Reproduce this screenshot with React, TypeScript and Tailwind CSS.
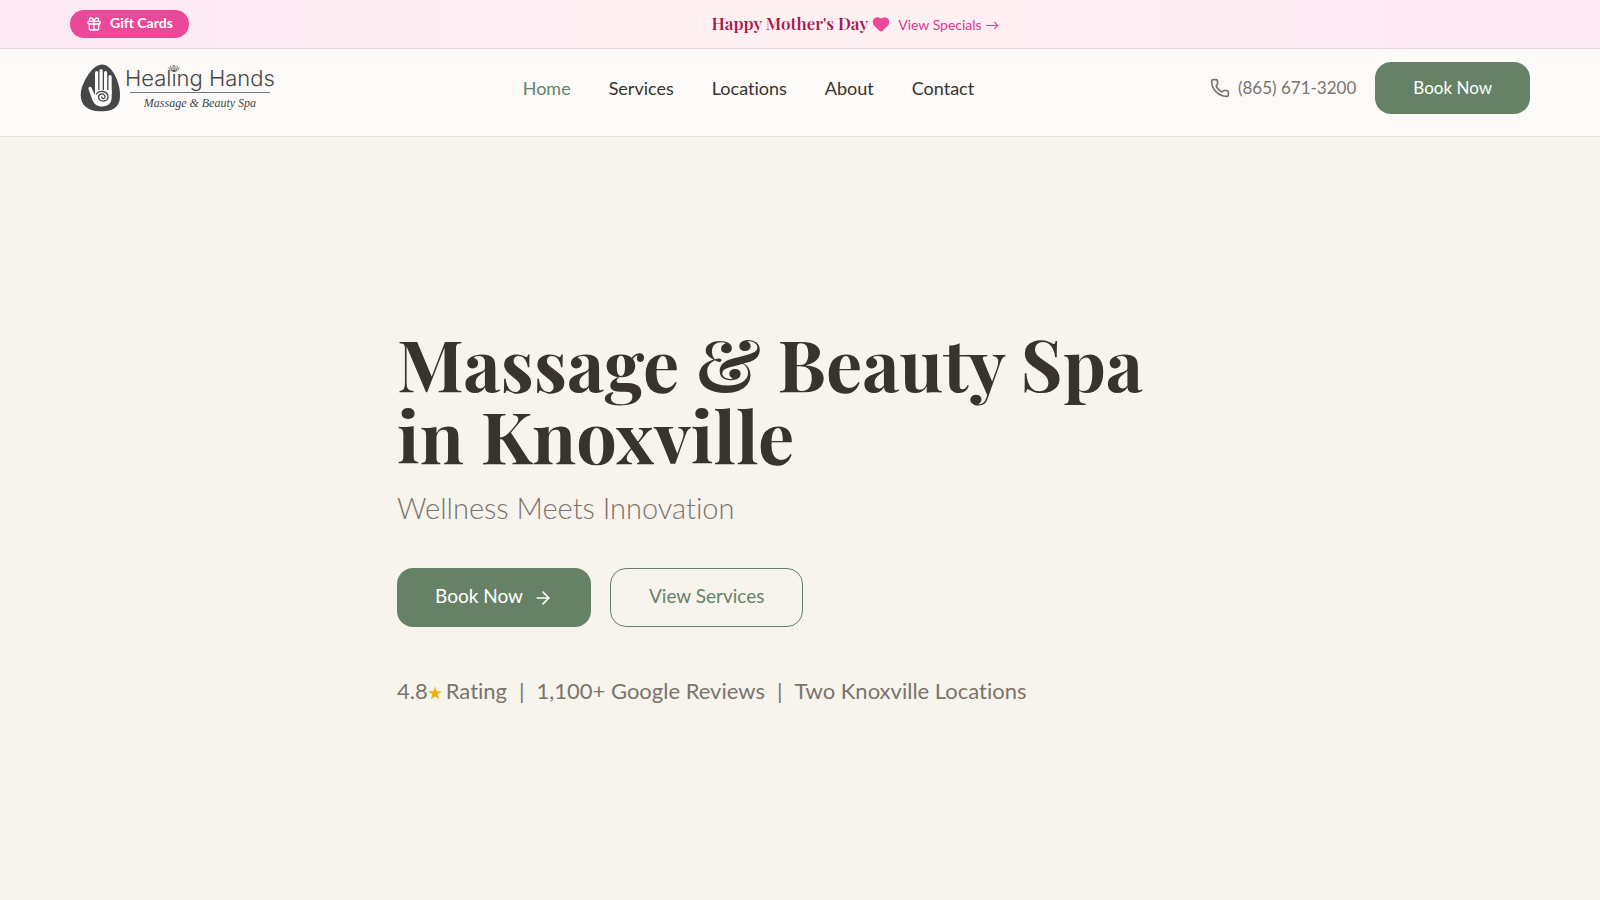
import { ArrowRight, Gift, Heart, Phone } from "lucide-react";

const navItems = ["Services", "Locations", "About", "Contact"];

function HandMark() {
  return (
    <svg viewBox="0 0 40 48" className="h-12 w-10 shrink-0" aria-hidden="true">
      <path
        d="M22 0.500C14 0.500 6 12 2 23C-2 36 3 47 20 47.300C36 47.500 40 41 40 31C40 18 32 0.500 22 0.500Z"
        fill="#464646"
      />
      <path
        d="M15 26H31.700V33C31.700 39 28 42.500 22.500 42.500C17 42.500 13.500 40 12 35L8.500 25C8 22.500 10.800 21.800 11.600 24L15 31Z"
        fill="#fbfaf8"
      />
      <path
        d="M16.600 28V8.500M21.100 28V6.500M25.600 28V8.500M30.100 29V12.500"
        fill="none"
        stroke="#fbfaf8"
        strokeWidth="3.200"
        strokeLinecap="round"
      />
      <path
        d="M16.500 30C19 26 27.500 26.500 28 32.500C28 38.500 18.500 38.500 18.500 33C18.800 29 25 29 25 32.800C24.800 35.300 21.500 35 21.800 33"
        fill="none"
        stroke="#464646"
        strokeWidth="1.300"
        strokeLinecap="round"
      />
    </svg>
  );
}

function Lotus() {
  return (
    <svg viewBox="0 0 12 8" className="absolute top-0 left-[43px] h-2 w-3" aria-hidden="true">
      <path
        d="M6 7C4.500 5 4.500 3 6 1C7.500 3 7.500 5 6 7ZM6 7C3.500 6.500 2.500 4.500 2.800 1.800M6 7C8.500 6.500 9.500 4.500 9.200 1.800M6 7C3.500 7.500 1.500 6 0.800 3.500M6 7C8.500 7.500 10.500 6 11.200 3.500"
        fill="none"
        stroke="#5a5a5a"
        strokeWidth="0.900"
      />
    </svg>
  );
}

function Logo() {
  return (
    <a href="#home" className="flex items-center gap-[5px] text-[#464646]">
      <HandMark />
      <span className="relative flex flex-col items-center">
        <Lotus />
        <span className="font-['Inter',sans-serif] text-[22px] leading-7 font-light">
          Healing Hands
        </span>
        <span className="h-px w-[140px] bg-[#777]" />
        <span className="font-['Liberation_Serif',serif] text-xs leading-5 italic">
          Massage &amp; Beauty Spa
        </span>
      </span>
    </a>
  );
}

function RatingStar() {
  return (
    <svg viewBox="0 0 24 24" className="mt-1 mr-1 size-3.5" role="img" aria-label="stars">
      <path
        d="M12 0.500L14.800 9H23.800L16.500 14.300L19.300 23L12 17.700L4.700 23L7.500 14.300L0.200 9H9.200Z"
        fill="#eab308"
      />
    </svg>
  );
}

export default function App() {
  return (
    <div className="flex min-h-screen flex-col bg-[#f7f4ed] font-['Lato',sans-serif] text-[#38332e] [font-variant-ligatures:no-common-ligatures]">
      <div className="flex h-[49px] items-center border-b border-[#f3d3e0] bg-linear-to-r from-[#fce7f3] via-[#fff1f2] to-[#fce7f3] px-[70px]">
        <a
          href="#gift-cards"
          className="flex h-7 items-center gap-2 rounded-full bg-[#ec4899] px-4 text-[14px] leading-6 font-bold text-white"
        >
          <Gift size={16} />
          <span className="pb-0.5">Gift Cards</span>
        </a>
        <div className="flex flex-1 items-center justify-center gap-2 pr-2">
          <p className="flex items-center gap-1 font-['Playfair_Display','Liberation_Serif',serif] text-[17px] font-semibold text-[#a8174f]">
            Happy Mother's Day
            <Heart size={18} className="fill-[#ec4899] text-[#ec4899]" />
          </p>
          <a href="#specials" className="text-[14px] text-[#db3a8c]">
            View Specials →
          </a>
        </div>
      </div>

      <header className="flex h-22 items-start justify-between border-b border-[#e7e2dc] bg-[#fbfaf8] px-[70px] pt-[13px]">
        <div className="flex h-13 items-center pr-3 pl-2.5">
          <Logo />
        </div>
        <nav className="flex h-13 items-center gap-[38px] text-lg">
          <a href="#home" className="text-[#658267]">
            Home
          </a>
          {navItems.map((item) => (
            <a key={item} href={`#${item.toLowerCase()}`}>
              {item}
            </a>
          ))}
        </nav>
        <div className="flex h-13 items-center gap-[19px]">
          <a href="tel:+18656713200" className="flex items-center gap-2 text-[17px] text-[#7a736c]">
            <Phone size={20} />
            (865) 671-3200
          </a>
          <button type="button" className="h-13 rounded-2xl bg-[#658267] px-[38px] text-[17px] text-white">
            Book Now
          </button>
        </div>
      </header>

      <main className="flex flex-1 items-center justify-center pb-1">
        <div className="w-full max-w-[806px]">
          <h1 className="font-['Playfair_Display','Liberation_Serif',serif] text-7xl leading-[72px] font-bold">
            <span className="block">Massage &amp; Beauty Spa</span>
            <span className="block">in Knoxville</span>
          </h1>
          <p className="mt-[18px] text-[29px] leading-10 font-light text-[#7a736c]">
            Wellness Meets Innovation
          </p>
          <div className="mt-10 flex gap-[19px]">
            <button
              type="button"
              className="flex h-[59px] items-center gap-2.5 rounded-2xl bg-[#658267] px-[38px] text-[19px] text-white"
            >
              <span className="pb-0.5">Book Now</span>
              <ArrowRight size={20} />
            </button>
            <button
              type="button"
              className="h-[59px] rounded-2xl border border-[#658267] px-[38px] pb-0.5 text-[19px] text-[#658267]"
            >
              View Services
            </button>
          </div>
          <p className="mt-12 flex items-center gap-3 text-[22px] leading-8 text-[#7a736c]">
            <span className="flex items-center">
              4.8
              <RatingStar />
              Rating
            </span>
            <span>|</span>
            <span>1,100+ Google Reviews</span>
            <span>|</span>
            <span>Two Knoxville Locations</span>
          </p>
        </div>
      </main>
    </div>
  );
}
